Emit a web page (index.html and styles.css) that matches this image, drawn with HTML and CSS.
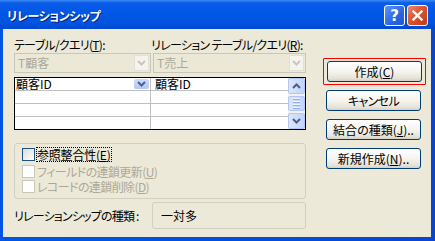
FILE: index.html
```html
<!DOCTYPE html>
<html lang="ja">
<head>
    <meta charset="UTF-8">
    <title>リレーションシップ</title>
    <link rel="stylesheet" href="styles.css">
</head>
<body>
    <div class="window">
        <div class="titlebar">
            <span class="title">リレーションシップ</span>
            <div class="tb-buttons">
                <span class="tb-btn help">?</span>
                <span class="tb-btn close">
                    <svg width="11" height="11" viewBox="0 0 11 11"><path d="M1.5 1.5 L9.5 9.5 M9.5 1.5 L1.5 9.5" stroke="#fff" stroke-width="2.4" stroke-linecap="square"/></svg>
                </span>
            </div>
        </div>
        <div class="client">
            <div class="left">
                <div class="labels">
                    <span class="lbl-1">テーブル/クエリ(<u>T</u>):</span>
                    <span>リレーション&nbsp;テーブル/クエリ(<u>R</u>):</span>
                </div>
                <div class="combos">
                    <div class="combo c1"><span class="combo-text">T顧客</span><span class="combo-drop"><svg width="9" height="6" viewBox="0 0 9 6"><path d="M1 1 L4.5 4.5 L8 1" stroke="#c9c7ba" stroke-width="2" fill="none"/></svg></span></div>
                    <div class="combo c2"><span class="combo-text">T売上</span><span class="combo-drop"><svg width="9" height="6" viewBox="0 0 9 6"><path d="M1 1 L4.5 4.5 L8 1" stroke="#c9c7ba" stroke-width="2" fill="none"/></svg></span></div>
                </div>
                <div class="grid">
                    <div class="grid-cols">
                        <div class="col col-a">
                            <div class="cell">顧客ID<span class="cell-drop"><svg width="9" height="6" viewBox="0 0 9 6"><path d="M1 1 L4.5 4.5 L8 1" stroke="#4d6185" stroke-width="2" fill="none"/></svg></span></div>
                            <div class="cell"></div>
                            <div class="cell"></div>
                            <div class="cell"></div>
                        </div>
                        <div class="col col-b">
                            <div class="cell">顧客ID</div>
                            <div class="cell"></div>
                            <div class="cell"></div>
                            <div class="cell"></div>
                        </div>
                    </div>
                    <div class="scrollbar">
                        <span class="sb-btn"><svg width="9" height="6" viewBox="0 0 9 6"><path d="M1 5 L4.5 1.5 L8 5" stroke="#4d6185" stroke-width="2" fill="none"/></svg></span>
                        <span class="sb-thumb"><i></i><i></i><i></i><i></i></span>
                        <span class="sb-btn"><svg width="9" height="6" viewBox="0 0 9 6"><path d="M1 1 L4.5 4.5 L8 1" stroke="#4d6185" stroke-width="2" fill="none"/></svg></span>
                    </div>
                </div>
                <div class="group">
                    <div class="check-row">
                        <span class="check"></span>
                        <span class="focus">参照整合性(<u>E</u>)</span>
                    </div>
                    <div class="check-row disabled">
                        <span class="check"></span>
                        <span class="kana">フィールドの連鎖更新(<u>U</u>)</span>
                    </div>
                    <div class="check-row disabled">
                        <span class="check"></span>
                        <span class="kana">レコードの連鎖削除(<u>D</u>)</span>
                    </div>
                </div>
                <div class="type-row">
                    <span class="type-label">リレーションシップの種類 :</span>
                    <div class="type-box">一対多</div>
                </div>
            </div>
            <div class="right">
                <div class="mark">
                    <button class="btn">作成(<u>C</u>)</button>
                </div>
                <button class="btn kana">キャンセル</button>
                <button class="btn">結合の種類(<u>J</u>)..</button>
                <button class="btn">新規作成(<u>N</u>)..</button>
            </div>
        </div>
    </div>
</body>
</html>
```
FILE: styles.css
```css
body {
    margin: 0;
    padding: 0;
    background: #fff;
    font-family: "Noto Sans CJK JP", "Noto Sans", sans-serif;
    font-size: 12px;
    font-feature-settings: "palt";
}
.window {
    width: 435px;
    height: 241px;
    display: flex;
    flex-direction: column;
    background: linear-gradient(to right, #0055e5, #0050dd 50%, #0a45d0);
}
.titlebar {
    height: 29px;
    display: flex;
    align-items: center;
    justify-content: space-between;
    padding: 0 7px 0 7px;
    box-sizing: border-box;
    background: linear-gradient(#3d8bf5 0, #0a5ce8 3px, #0058e6 40%, #0053df 80%, #0047cf 100%);
}
.title {
    color: #fff;
    font-weight: bold;
    font-size: 12px;
    letter-spacing: -0.4px;
    text-shadow: 1px 1px 0 #0a1e78;
    margin-top: 2px;
}
.tb-buttons {
    display: flex;
    gap: 2px;
    margin-top: 2px;
}
.tb-btn {
    width: 19px;
    height: 19px;
    border: 1px solid #fff;
    border-radius: 3px;
    display: flex;
    align-items: center;
    justify-content: center;
    color: #fff;
    font-family: "DejaVu Sans", sans-serif;
    font-weight: bold;
    font-size: 15px;
}
.help {
    background: linear-gradient(135deg, #5d95fb, #2b65e4 60%, #1f55d4);
}
.close {
    background: linear-gradient(135deg, #ec8a6c, #dc552f 45%, #c23a15);
}
.client {
    flex: 1;
    margin: 0 4px 4px 3px;
    background: #ece9d8;
    display: flex;
    padding: 6px 0 0 11px;
}
.left {
    width: 292px;
    display: flex;
    flex-direction: column;
}
.labels {
    height: 18px;
    display: flex;
    align-items: center;
    white-space: nowrap;
    letter-spacing: -0.7px;
    color: #000;
}
.lbl-1 {
    width: 137px;
}
.kana {
    letter-spacing: -0.6px;
}
.combos {
    display: flex;
    gap: 2px;
    height: 20px;
    margin-bottom: 4px;
}
.combo {
    box-sizing: border-box;
    border: 1px solid #c9c7ba;
    background: #ebe8d7;
    display: flex;
    align-items: stretch;
    justify-content: space-between;
    color: #aca899;
}
.c1 { width: 137px; }
.c2 { width: 153px; }
.combo-text {
    padding-left: 3px;
    line-height: 18px;
}
.combo-drop {
    width: 15px;
    margin: 1px;
    background: #f4f3ee;
    border: 1px solid #e3e1d6;
    display: flex;
    align-items: center;
    justify-content: center;
    box-sizing: border-box;
}
.grid {
    height: 53px;
    box-sizing: border-box;
    border: 1px solid #000;
    background: #fff;
    display: flex;
}
.grid-cols {
    flex: 1;
    display: flex;
}
.col {
    display: flex;
    flex-direction: column;
}
.col-a {
    width: 135px;
    border-right: 1px solid #c0c0c0;
}
.col-b {
    flex: 1;
}
.cell {
    height: 12px;
    line-height: 12px;
    border-bottom: 1px solid #c0c0c0;
    display: flex;
    justify-content: space-between;
    align-items: center;
    padding-left: 1px;
}
.cell:last-child {
    border-bottom: none;
}
.col-b .cell {
    padding-left: 4px;
}
.cell-drop {
    width: 15px;
    height: 10px;
    margin-right: 1px;
    background: linear-gradient(#cfdcfb, #b3c7f6);
    border-radius: 2px;
    display: flex;
    align-items: center;
    justify-content: center;
}
.scrollbar {
    width: 17px;
    display: flex;
    flex-direction: column;
    justify-content: space-between;
    background: #f3f1ec;
}
.sb-btn, .sb-thumb {
    box-sizing: border-box;
    width: 17px;
    height: 16px;
    border: 1px solid #b3c6f5;
    border-radius: 2px;
    background: linear-gradient(to right, #dce6fd, #c1d3fb);
    display: flex;
    align-items: center;
    justify-content: center;
}
.sb-thumb {
    height: 15px;
    flex-direction: column;
    gap: 1px;
}
.sb-thumb i {
    display: block;
    width: 7px;
    height: 1px;
    background: #eef3fe;
    border-bottom: 1px solid #8cb0f8;
}
.group {
    margin-top: 13px;
    height: 56px;
    box-sizing: border-box;
    border: 1px solid #d0d0bf;
    border-radius: 3px;
    padding: 4px 0 0 7px;
}
.check-row {
    display: flex;
    align-items: center;
    height: 15px;
    line-height: 13px;
    gap: 2px;
    white-space: nowrap;
}
.check-row:first-child {
    height: 13px;
    margin-bottom: 3px;
}
.check {
    width: 13px;
    height: 13px;
    box-sizing: border-box;
    border: 1px solid #1c5180;
    background: linear-gradient(135deg, #dcdcd6, #fff);
}
.focus {
    outline: 1px dotted #000;
    outline-offset: 0;
    letter-spacing: -0.2px;
}
.disabled {
    color: #aca899;
}
.disabled .check {
    border-color: #cac8bb;
    background: #fff;
}
.type-row {
    margin-top: 3px;
    display: flex;
    align-items: center;
}
.type-label {
    width: 138px;
    letter-spacing: -0.8px;
    white-space: nowrap;
}
.type-box {
    width: 154px;
    height: 27px;
    box-sizing: border-box;
    border: 1px solid #d0d0bf;
    border-radius: 3px;
    padding-left: 8px;
    display: flex;
    align-items: center;
}
.right {
    display: flex;
    flex-direction: column;
    gap: 8px;
    margin-left: 17px;
    padding-top: 23px;
}
.mark {
    width: 101px;
    height: 25px;
    border: 1px solid #f00;
    border-radius: 1px;
    display: flex;
    align-items: center;
    justify-content: center;
    margin-bottom: -3px;
}
.right > .btn {
    margin-left: 3px;
}
.btn {
    width: 95px;
    height: 21px;
    box-sizing: border-box;
    border: 1px solid #003c74;
    border-radius: 3px;
    background: linear-gradient(#fff, #f5f4ef 50%, #e6e3d8 85%, #d6d0c5);
    font-family: inherit;
    font-size: 12px;
    font-feature-settings: "palt";
    color: #000;
    padding: 0;
    line-height: 18px;
}
```
